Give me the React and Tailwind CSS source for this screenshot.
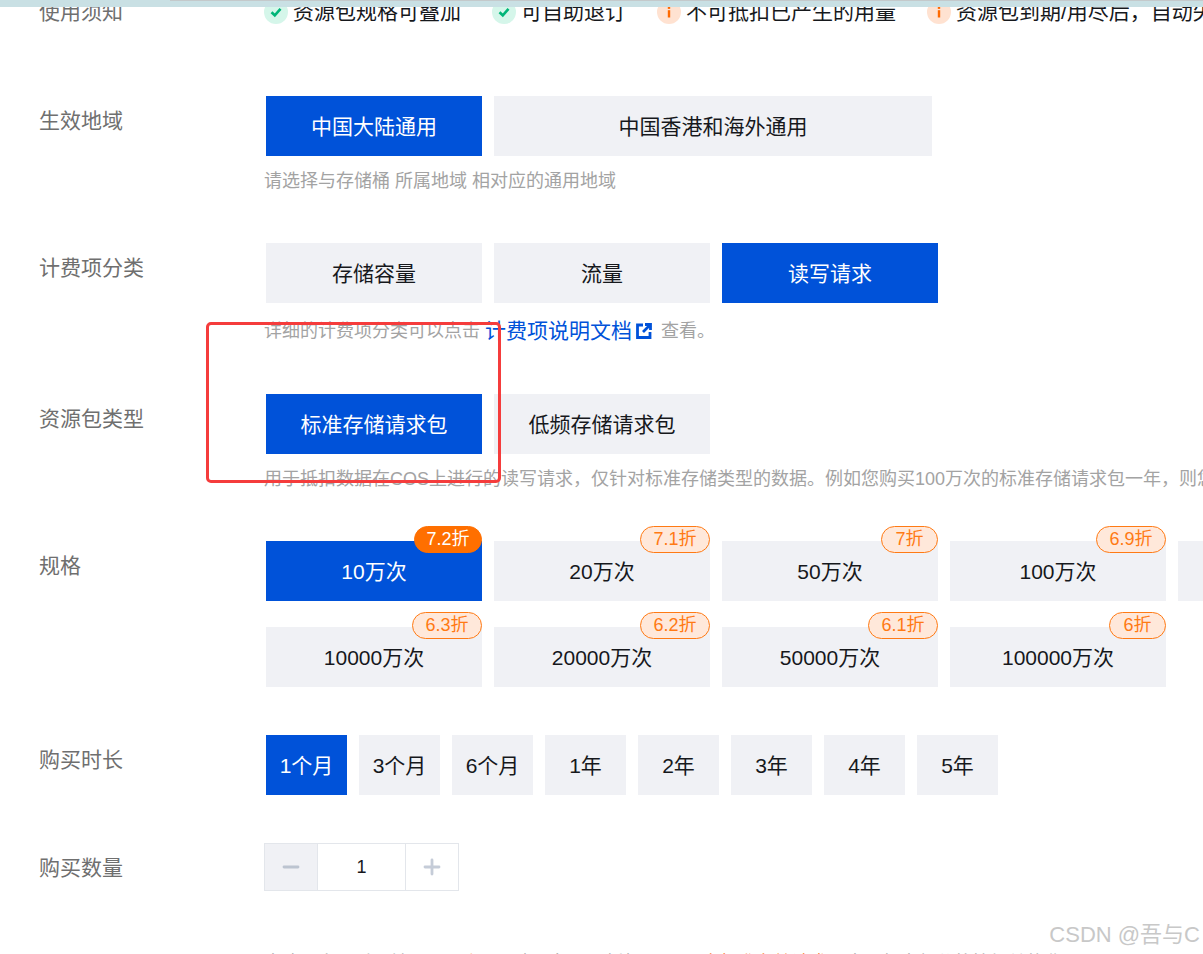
import { Plus, Minus } from 'lucide-react'

const specRows = [
  [
    { label: '10万次', off: '7.2折', active: true, w: 'w-[68px]' },
    { label: '20万次', off: '7.1折', w: 'w-[70px]' },
    { label: '50万次', off: '7折', w: 'w-[57px]' },
    { label: '100万次', off: '6.9折', w: 'w-[70px]' },
    { label: '', off: '', w: '' },
  ],
  [
    { label: '10000万次', off: '6.3折', w: 'w-[70px]' },
    { label: '20000万次', off: '6.2折', w: 'w-[70px]' },
    { label: '50000万次', off: '6.1折', w: 'w-[70px]' },
    { label: '100000万次', off: '6折', w: 'w-[57px]' },
  ],
]

const durations = ['1个月', '3个月', '6个月', '1年', '2年', '3年', '4年', '5年']

function Btn({ active, className = '', children }) {
  return (
    <div
      className={`relative flex h-[60px] shrink-0 items-center justify-center pt-px text-[21px] ${
        active ? 'bg-[#0052d9] text-white' : 'bg-[#f0f1f5] text-[#16181c]'
      } ${className}`}
    >
      {children}
    </div>
  )
}

function Row({ label, className = '', labelClass = 'pt-[10px]', children }) {
  return (
    <div className={`flex ${className}`}>
      <div className={`w-[266px] shrink-0 pl-[39px] text-[21px] leading-[30px] text-[#6f6f6f] ${labelClass}`}>{label}</div>
      <div className="min-w-0 flex-1">{children}</div>
    </div>
  )
}

function Hint({ className = '', children }) {
  return <div className={`-ml-0.5 whitespace-nowrap text-[18px] leading-[26px] text-[#a3a3a3] ${className}`}>{children}</div>
}

function Notice({ type, className = '', children }) {
  const ok = type === 'ok'
  return (
    <div className={`flex shrink-0 items-center gap-[5px] ${className}`}>
      <span className={`flex h-6 w-6 items-center justify-center rounded-full ${ok ? 'bg-[#d5f6ea]' : 'bg-[#ffe2d1]'}`}>
        {ok ? (
          <svg width="12" height="12" viewBox="0 0 12 12">
            <path d="M1.500 6.200 4.800 9.300 10.500 2.800" fill="none" stroke="#00b578" strokeWidth="2.600" />
          </svg>
        ) : (
          <svg width="12" height="12" viewBox="0 0 12 12">
            <rect x="4.800" y="0.500" width="2.400" height="2.400" fill="#ff6a00" />
            <rect x="4.800" y="4.200" width="2.400" height="7.300" fill="#ff6a00" />
          </svg>
        )}
      </span>
      <span className="text-[21px] leading-[30px] text-[#16181c]">{children}</span>
    </div>
  )
}

export default function App() {
  return (
    <div className="relative h-[954px] w-[1203px] overflow-hidden bg-white font-['Liberation_Sans','Noto_Sans_CJK_SC',sans-serif]">
      {/* window edge over the scrolled page */}
      <div className="absolute inset-x-0 top-0 z-10 h-[7px] bg-[#c9e0e4]" />
      <div className="absolute left-[170px] right-0 top-0 z-10 h-px bg-[#c4c9cb]" />

      <Row label="使用须知" labelClass="" className="-mt-[3px] h-[99px]">
        <div className="-ml-0.5 flex whitespace-nowrap">
          <Notice type="ok" className="w-[228px]">资源包规格可叠加</Notice>
          <Notice type="ok" className="w-[165px]">可自助退订</Notice>
          <Notice type="info" className="w-[270px]">不可抵扣已产生的用量</Notice>
          <Notice type="info">资源包到期/用尽后，自动失效</Notice>
        </div>
      </Row>

      <Row label="生效地域" className="h-[147px]">
        <div className="flex gap-3">
          <Btn active className="w-[216px]">中国大陆通用</Btn>
          <Btn className="w-[438px]">中国香港和海外通用</Btn>
        </div>
        <Hint className="mt-[12px]">请选择与存储桶 所属地域 相对应的通用地域</Hint>
      </Row>

      <Row label="计费项分类" className="h-[151px]">
        <div className="flex gap-3">
          <Btn className="w-[216px]">存储容量</Btn>
          <Btn className="w-[216px]">流量</Btn>
          <Btn active className="w-[216px]">读写请求</Btn>
        </div>
        <Hint className="mt-[15px] flex items-center">
          详细的计费项分类可以点击
          <span className="ml-[5px] text-[21px] text-[#0052d9]">计费项说明文档</span>
          <svg className="ml-[4px]" width="16" height="16" viewBox="0 0 16 16">
            <path d="M7 2H1.500V14.500H14V9M9 1.500H14.500V7M14 2 7 9" fill="none" stroke="#0052d9" strokeWidth="2.800" />
          </svg>
          <span className="ml-[9px]">查看。</span>
        </Hint>
      </Row>

      <Row label="资源包类型" className="h-[147px]">
        <div className="flex gap-3">
          <Btn active className="w-[216px]">标准存储请求包</Btn>
          <Btn className="w-[216px]">低频存储请求包</Btn>
        </div>
        <Hint className="mt-[12px]">
          用于抵扣数据在COS上进行的读写请求，仅针对标准存储类型的数据。例如您购买100万次的标准存储请求包一年，则您每月可抵扣100万次请求
        </Hint>
      </Row>

      <Row label="规格" className="h-[194px]">
        <div className="flex flex-col gap-[26px]">
          {specRows.map((row, r) => (
            <div key={r} className="flex gap-3">
              {row.map((s, i) => (
                <Btn key={i} active={s.active} className="w-[216px]">
                  <span className="pt-px">{s.label}</span>
                  {s.off && (
                    <span
                      className={`absolute -top-[15px] right-0 flex h-[27px] items-center justify-center rounded-[14px] border text-[18px] ${s.w} ${
                        s.active
                          ? 'border-[#ff6f00] bg-[#ff6f00] text-white'
                          : 'border-[#ff7a14] bg-[#ffe8da] text-[#ff7a14]'
                      }`}
                    >
                      {s.off}
                    </span>
                  )}
                </Btn>
              ))}
            </div>
          ))}
        </div>
      </Row>

      <Row label="购买时长" className="h-[108px]">
        <div className="flex gap-3">
          {durations.map((d, i) => (
            <Btn key={d} active={i === 0} className="w-[81px]">{d}</Btn>
          ))}
        </div>
      </Row>

      <Row label="购买数量" className="h-[107px]">
        <div className="-ml-0.5 flex h-12 w-[195px] border border-[#e3e6eb] text-[#16181c]">
          <div className="flex w-[53px] items-center justify-center border-r border-[#e3e6eb] bg-[#f0f1f5]">
            <Minus size={24} strokeWidth={2.8} className="text-[#bcc4d0]" />
          </div>
          <div className="flex w-[88px] items-center justify-center border-r border-[#e3e6eb] text-[18px]">1</div>
          <div className="flex flex-1 items-center justify-center">
            <Plus size={24} strokeWidth={2.8} className="text-[#c5ccd8]" />
          </div>
        </div>
      </Row>

      <div className="-ml-0.5 whitespace-nowrap pl-[266px] text-[18px] leading-[26px] text-[#a3a3a3]">
        当购买产品时，转入<span className="text-[#ff6a00]">【一个月】</span>内，每日可抵扣100
        <span className="ml-3 text-[#ff6a00]">万次标准存储请求</span>，当月超出部分将按相关的费用
      </div>

      {/* red annotation box */}
      <div className="absolute left-[206px] top-[322px] z-20 h-[161px] w-[295px] rounded-[5px] border-[3px] border-[#f53c3c]" />

      <div className="absolute right-[3px] top-[920px] z-20 text-[22px] leading-[30px] text-[#c8c8c8]">CSDN @吾与C</div>
    </div>
  )
}
